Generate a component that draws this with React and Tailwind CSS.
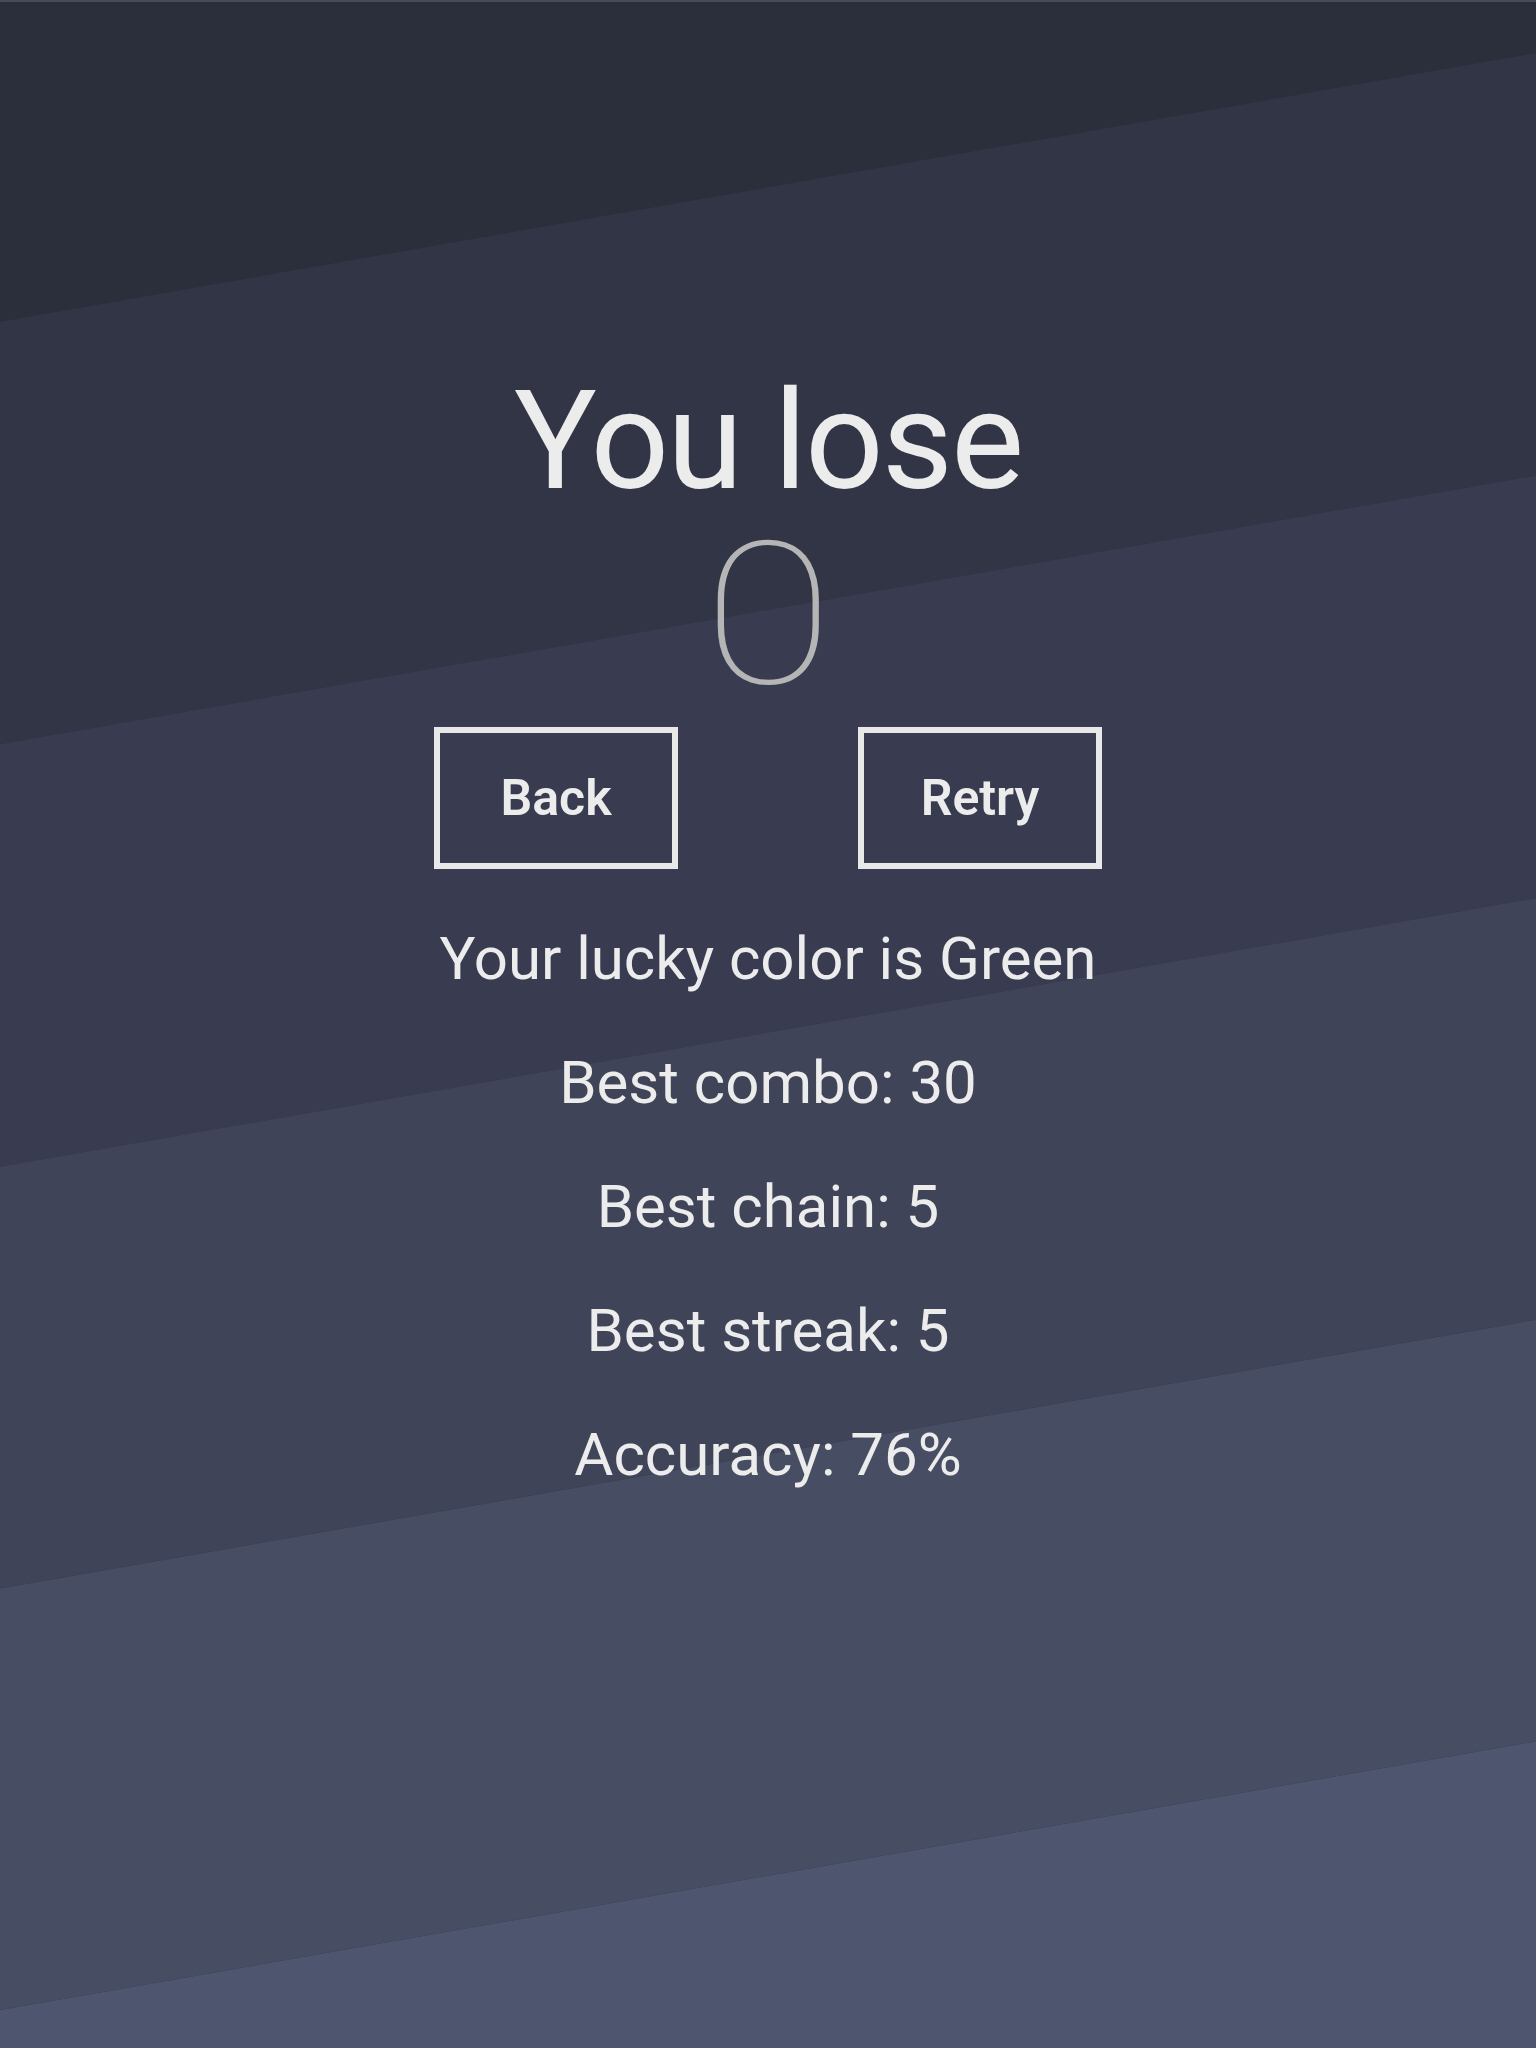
import React from 'react';

// diagonal background bands, left/right edge y of each boundary
const bands = [
  { color: '#2b2f3c', top: [-103, -372] },
  { color: '#313545', top: [320, 51] },
  { color: '#393c50', top: [743, 474] },
  { color: '#3f4458', top: [1166, 897] },
  { color: '#474d63', top: [1588, 1319] },
  { color: '#4d556f', top: [2010, 1741] },
];

const Backdrop = () => (
  <svg
    className="absolute inset-0 w-full h-full"
    viewBox="0 0 1536 2048"
    preserveAspectRatio="none"
  >
    {bands.map((b, i) => {
      const next = bands[i + 1];
      const [l, r] = b.top;
      const [nl, nr] = next ? next.top : [2600, 2600];
      return (
        <polygon
          key={i}
          points={`0,${l} 1536,${r} 1536,${nr} 0,${nl}`}
          fill={b.color}
        />
      );
    })}
  </svg>
);

const stats = [
  'Your lucky color is Green',
  'Best combo: 30',
  'Best chain: 5',
  'Best streak: 5',
  'Accuracy: 76%',
];

export default function App() {
  return (
    <div
      className="relative w-full h-[2048px] overflow-hidden bg-[#2b2f3c] text-[#ececec] border-t-2 border-[#474b58]"
      style={{ fontFamily: 'Roboto, "Liberation Sans", sans-serif' }}
    >
      <Backdrop />

      <main className="relative flex flex-col items-center pt-[370px]">
        <h1 className="text-[138px] leading-[138px] font-normal tracking-[-2px]">You lose</h1>

        <div className="mt-[6px] text-[198px] leading-[198px] font-thin text-[#b5b5b5] scale-x-[1.2]">0</div>

        <div className="mt-[13px] flex gap-[180px]">
          <button className="w-[244px] h-[142px] border-[6px] border-[#e8e8e8] text-[50px] font-semibold text-[#ececec] flex items-center justify-center">
            Back
          </button>
          <button className="w-[244px] h-[142px] border-[6px] border-[#e8e8e8] text-[50px] font-semibold text-[#ececec] flex items-center justify-center">
            Retry
          </button>
        </div>

        <div className="mt-[28px] flex flex-col items-center">
          {stats.map((s) => (
            <p key={s} className="text-[60px] leading-[124px]">
              {s}
            </p>
          ))}
        </div>
      </main>
    </div>
  );
}
